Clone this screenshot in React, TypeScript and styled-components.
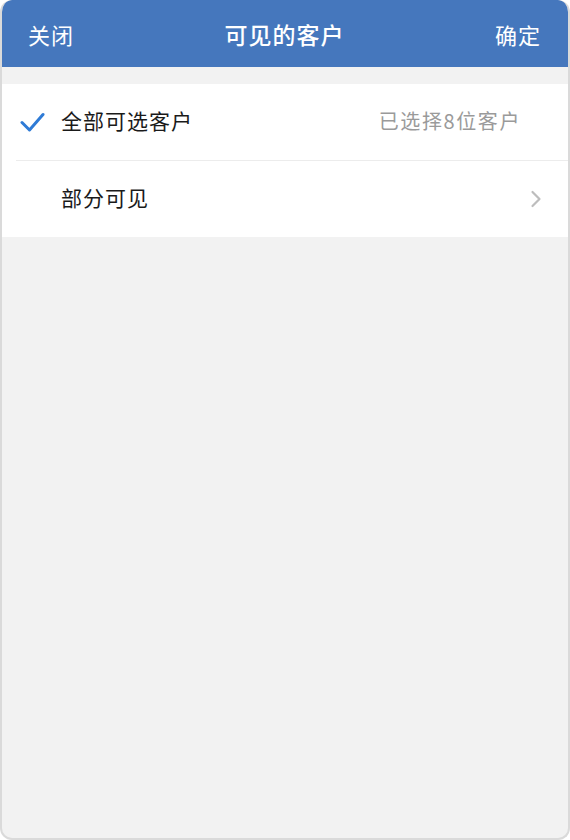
import React from 'react'
import styled, { createGlobalStyle } from 'styled-components'

const GlobalStyle = createGlobalStyle`
  html, body {
    margin: 0;
    padding: 0;
    background: #fff;
  }
  body {
    font-family: 'Noto Sans CJK SC', 'Noto Sans', sans-serif;
  }
`

const Frame = styled.div`
  box-sizing: border-box;
  width: 570px;
  height: 840px;
  border: 2px solid #dadada;
  border-top: none;
  border-radius: 12px;
  overflow: hidden;
  background: #f2f2f2;
  display: flex;
  flex-direction: column;
`

const Header = styled.div`
  height: 67px;
  margin: 0 -2px;
  padding: 0 29px 0 28px;
  background: #4577bd;
  color: #fff;
  display: grid;
  grid-template-columns: 1fr auto 1fr;
  align-items: center;
  font-size: 22px;
  letter-spacing: 1px;
  border-radius: 12px 12px 0 0;
`

const HeaderButton = styled.span<{ align?: 'left' | 'right' }>`
  justify-self: ${({ align }) => (align === 'right' ? 'end' : 'start')};
  cursor: pointer;
`

const Title = styled.span`
  font-size: 23px;
  font-weight: 500;
`

const List = styled.div`
  margin-top: 17px;
  background: #fff;
  display: flex;
  flex-direction: column;
`

const Row = styled.div<{ divider?: boolean }>`
  height: 76px;
  margin-left: 14px;
  padding-right: 26px;
  display: flex;
  align-items: center;
  border-bottom: ${({ divider }) => (divider ? '1px solid #ececec' : 'none')};
`

const Mark = styled.span`
  width: 41px;
  display: flex;
  align-items: center;
  padding-left: 4px;
`

const Label = styled.span`
  flex: 1;
  font-size: 21px;
  color: #1a1a1a;
  letter-spacing: 1px;
  margin-bottom: 4px;
`

const Hint = styled.span`
  font-size: 20px;
  color: #9a9a9a;
  letter-spacing: 1.6px;
  margin-right: 21px;
  margin-bottom: 4px;
`

const Check = () => (
  <svg width="26" height="22" viewBox="0 0 26 22">
    <path d="M2 11.5 L9.5 19 L23 3.5" fill="none" stroke="#2f7bd6" strokeWidth="3" strokeLinecap="round" strokeLinejoin="round" />
  </svg>
)

const Chevron = () => (
  <svg width="12" height="18" viewBox="0 0 12 18">
    <path d="M2.5 2 L9.5 9 L2.5 16" fill="none" stroke="#bdbdbd" strokeWidth="2.2" strokeLinecap="round" strokeLinejoin="round" />
  </svg>
)

export default function App() {
  return (
    <>
      <GlobalStyle />
      <Frame>
        <Header>
          <HeaderButton>关闭</HeaderButton>
          <Title>可见的客户</Title>
          <HeaderButton align="right">确定</HeaderButton>
        </Header>
        <List>
          <Row divider>
            <Mark>
              <Check />
            </Mark>
            <Label>全部可选客户</Label>
            <Hint>已选择8位客户</Hint>
          </Row>
          <Row>
            <Mark />
            <Label>部分可见</Label>
            <Chevron />
          </Row>
        </List>
      </Frame>
    </>
  )
}
